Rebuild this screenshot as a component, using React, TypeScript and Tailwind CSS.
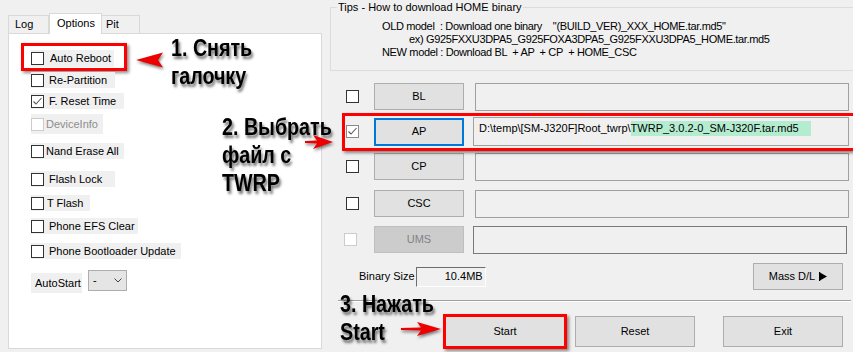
import React from "react";

const Check = ({ checked = false, disabled = false, dim = false }: { checked?: boolean; disabled?: boolean; dim?: boolean }) => (
  <span
    className={
      disabled
        ? "w-[13px] h-[13px] border border-[#cccccc] bg-white flex items-center justify-center shrink-0"
        : dim
        ? "w-[13px] h-[13px] border border-[#8a8a8a] bg-white flex items-center justify-center shrink-0"
        : "w-[13px] h-[13px] border border-[#333333] bg-white flex items-center justify-center shrink-0"
    }
  >
    {checked && (
      <svg width="11" height="11" viewBox="0 0 11 11">
        <path d="M1.5 5.5 L4 8 L9.5 2" stroke="#5a5a5a" strokeWidth="1.1" fill="none" />
      </svg>
    )}
  </span>
);

type Opt = { label: string; mt: string; h: string; w: string; gap: string; checked?: boolean; disabled?: boolean; boxed?: boolean };

const opts: Opt[] = [
  { label: "Auto Reboot", mt: "mt-[16px]", h: "h-[17px]", w: "w-[83px]", gap: "ml-[6px]", boxed: true },
  { label: "Re-Partition", mt: "mt-[5px]", h: "h-[16px]", w: "w-[84px]", gap: "ml-[5px]" },
  { label: "F. Reset Time", mt: "mt-[5px]", h: "h-[16px]", w: "w-[93px]", gap: "ml-[5px]", checked: true },
  { label: "DeviceInfo", mt: "mt-[5px]", h: "h-[20px]", w: "w-[72px]", gap: "ml-[2px]", disabled: true },
  { label: "Nand Erase All", mt: "mt-[9px]", h: "h-[16px]", w: "w-[93px]", gap: "ml-[2px]" },
  { label: "Flash Lock", mt: "mt-[12px]", h: "h-[16px]", w: "w-[84px]", gap: "ml-[5px]" },
  { label: "T Flash", mt: "mt-[8px]", h: "h-[16px]", w: "w-[59px]", gap: "ml-[3px]" },
  { label: "Phone EFS Clear", mt: "mt-[7px]", h: "h-[16px]", w: "w-[107px]", gap: "ml-[5px]" },
  { label: "Phone Bootloader Update", mt: "mt-[9px]", h: "h-[16px]", w: "w-[150px]", gap: "ml-[5px]" },
];

const Btn = ({ children, className }: { children: React.ReactNode; className: string }) => (
  <div className={"flex items-center justify-center bg-[#e1e1e1] border border-[#adadad] text-black " + className}>{children}</div>
);

const anno = "absolute origin-top-left scale-x-[0.82] font-bold text-black text-[24px] leading-[28px] whitespace-nowrap [font-family:'Liberation_Sans',Arial,sans-serif] [text-shadow:2px_3px_3px_rgba(0,0,0,0.55)]";

export default function App() {
  return (
    <div className="relative w-[853px] h-[352px] overflow-hidden bg-[#f0f0f0] flex text-[11px] leading-[13px] text-black [font-family:'Liberation_Sans',Arial,sans-serif]">
      {/* Left column */}
      <div className="ml-[8px] w-[314px] flex flex-col pt-[13px]">
        <div className="flex items-end h-[20px]">
          <div className="h-[18px] w-[41px] border border-b-0 border-[#d9d9d9] bg-[#f0f0f0] pl-[6px] flex items-center">Log</div>
          <div className="relative z-10 h-[21px] -mb-px w-[53px] border border-b-0 border-[#d9d9d9] bg-white pl-[7px] pb-[2px] flex items-center">Options</div>
          <div className="h-[18px] w-[38px] border border-b-0 border-l-0 border-[#d9d9d9] bg-[#f0f0f0] pl-[4px] flex items-center">Pit</div>
        </div>
        <div className="h-[316px] bg-white border border-[#d9d9d9] flex flex-col">
          {opts.map((o) => (
            <div key={o.label} className={"relative ml-[22px] flex items-center bg-[#f0f0f0] " + o.mt + " " + o.h + " " + o.w}>
              <Check checked={o.checked} disabled={o.disabled} />
              <span className={o.gap + (o.disabled ? " text-[#8d8d8d]" : "")}>{o.label}</span>
              {o.boxed && (
                <div className="absolute -left-[10px] -top-[7px] w-[106px] h-[28px] border-[3px] border-[#ff0000] shadow-[2px_2px_3px_rgba(0,0,0,0.45)]" />
              )}
            </div>
          ))}
          <div className="ml-[22px] mt-[11px] flex items-start h-[23px]">
            <div className="mt-[3px] h-[20px] w-[51px] bg-[#f0f0f0] pl-[4px] flex items-center">AutoStart</div>
            <div className="ml-[6px] h-[21px] w-[39px] bg-[#e5e5e5] border border-[#adadad] flex items-center pl-[4px] pr-[4px] justify-between">
              <span>-</span>
              <svg width="8" height="5" viewBox="0 0 8 5">
                <path d="M0.5 0.5 L4 4 L7.5 0.5" stroke="#444" fill="none" />
              </svg>
            </div>
          </div>
        </div>
      </div>

      {/* Right column */}
      <div className="ml-[8px] flex-1 flex flex-col">
        <fieldset className="h-[71px] border border-r-0 border-[#dcdcdc] -mr-[4px]">
          <legend className="ml-[6px] px-[1px] leading-[14px]">Tips - How to download HOME binary</legend>
          <div className="pl-[51px] mt-[6px] tracking-[-0.35px]">
            <div className="whitespace-pre leading-[13px]">OLD model  : Download one binary    "(BUILD_VER)_XXX_HOME.tar.md5"</div>
            <div className="ml-[27px] whitespace-pre leading-[13px]">ex) G925FXXU3DPA5_G925FOXA3DPA5_G925FXXU3DPA5_HOME.tar.md5</div>
            <div className="whitespace-pre leading-[13px]">NEW model : Download BL  + AP  + CP  + HOME_CSC</div>
          </div>
        </fieldset>

        {/* BL */}
        <div className="mt-[12px] flex items-center h-[27px]">
          <span className="ml-[16px]"><Check /></span>
          <Btn className="ml-[15px] w-[90px] h-[27px]">BL</Btn>
          <div className="ml-[11px] w-[374px] h-[28px] border border-[#a0a0a0] bg-[#f0f0f0]" />
        </div>
        {/* AP */}
        <div className="relative mt-[8px] flex items-center h-[27px]">
          <span className="ml-[16px]"><Check checked dim /></span>
          <div className="ml-[15px] w-[90px] h-[28px] flex items-center justify-center bg-[#e1e1e1] border-2 border-[#0078d7]">AP</div>
          <div className="ml-[9px] w-[376px] h-[29px] border border-[#a0a0a0] bg-[#f0f0f0] pl-[5px] pt-[3px] whitespace-pre">
            <span className="inline-block leading-[15px]">D:\temp\[SM-J320F]Root_twrp\</span>
            <span className="inline-block leading-[15px] bg-[#b4ecd0] pr-[12px]">TWRP_3.0.2-0_SM-J320F.tar.md5</span>
          </div>
          <div className="absolute left-[12px] -top-[5px] w-[520px] h-[38px] border-[3px] border-[#ff0000] shadow-[2px_2px_3px_rgba(0,0,0,0.45)]" />
        </div>
        {/* CP */}
        <div className="mt-[8px] flex items-center h-[27px]">
          <span className="ml-[16px]"><Check /></span>
          <Btn className="ml-[15px] w-[90px] h-[27px]">CP</Btn>
          <div className="ml-[11px] w-[374px] h-[28px] border border-[#a0a0a0] bg-[#f0f0f0]" />
        </div>
        {/* CSC */}
        <div className="mt-[10px] flex items-center h-[27px]">
          <span className="ml-[16px]"><Check /></span>
          <Btn className="ml-[15px] w-[90px] h-[27px]">CSC</Btn>
          <div className="ml-[11px] w-[374px] h-[28px] border border-[#a0a0a0] bg-[#f0f0f0]" />
        </div>
        {/* UMS */}
        <div className="mt-[9px] flex items-center h-[27px]">
          <span className="ml-[14px]"><Check disabled /></span>
          <div className="ml-[17px] w-[90px] h-[27px] flex items-center justify-center bg-[#cccccc] border border-[#bfbfbf] text-[#838383]">UMS</div>
          <div className="ml-[9px] w-[374px] h-[28px] border border-[#7a7a7a] bg-[#f0f0f0]" />
        </div>

        {/* Binary size + Mass D/L */}
        <div className="mt-[10px] flex items-center h-[27px]">
          <span className="ml-[29px]">Binary Size</span>
          <div className="ml-[1px] w-[70px] h-[20px] border-t border-l border-[#6d6d6d] border-b border-r border-b-white border-r-white bg-[#f0f0f0] flex items-center justify-end pr-[2px]">10.4MB</div>
          <Btn className="ml-auto mr-[10px] w-[90px] h-[27px]">
            <span>Mass D/L</span>
            <svg className="ml-[4px]" width="8" height="9" viewBox="0 0 8 9">
              <path d="M0 0 L8 4.5 L0 9 Z" fill="#000" />
              <path d="M0 0 L1.2 0 L1.2 9 L0 9 Z" fill="#000" />
            </svg>
          </Btn>
        </div>

        {/* Separator */}
        <div className="mt-[10px] ml-[8px] mr-[2px] h-[2px] border-t border-[#a0a0a0] border-b border-b-white" />

        {/* Bottom buttons */}
        <div className="mt-[14px] flex items-center h-[31px]">
          <div className="relative ml-[115px]">
            <Btn className="w-[120px] h-[31px]">Start</Btn>
            <div className="absolute -left-[2px] -top-[2px] w-[124px] h-[35px] border-[3px] border-[#ff0000] shadow-[2px_2px_3px_rgba(0,0,0,0.45)]" />
          </div>
          <Btn className="ml-[10px] w-[120px] h-[31px]">Reset</Btn>
          <Btn className="ml-[28px] w-[120px] h-[31px]">Exit</Btn>
        </div>
      </div>

      {/* Annotations */}
      <div className={anno + " left-[171px] top-[34px]"}>
        <div>1. Снять</div>
        <div>галочку</div>
      </div>
      <svg className="absolute left-[136px] top-[52px] [filter:drop-shadow(1px_2px_1.5px_rgba(0,0,0,0.5))]" width="28" height="16" viewBox="0 0 28 16">
        <path d="M0 8 L27 0.5 L22 8 L27 15.5 Z" fill="#ee0000" />
      </svg>

      <div className={anno + " left-[222px] top-[113px]"}>
        <div>2. Выбрать</div>
        <div>файл с</div>
        <div>TWRP</div>
      </div>
      <svg className="absolute left-[305px] top-[134px] [filter:drop-shadow(1px_2px_1.5px_rgba(0,0,0,0.5))]" width="29" height="16" viewBox="0 0 29 16">
        <path d="M0 7 L12 6.5 L8 1 L28 8 L8 15 L12 9.5 L0 9 Z" fill="#ee0000" />
      </svg>

      <div className={anno + " left-[340px] top-[290px]"}>
        <div>3. Нажать</div>
        <div>Start</div>
      </div>
      <svg className="absolute left-[401px] top-[321px] [filter:drop-shadow(1px_2px_1.5px_rgba(0,0,0,0.5))]" width="41" height="16" viewBox="0 0 41 16">
        <path d="M0 7 L20 6.5 L16 1 L40 8 L16 15 L20 9.5 L0 9 Z" fill="#ee0000" />
      </svg>
    </div>
  );
}
